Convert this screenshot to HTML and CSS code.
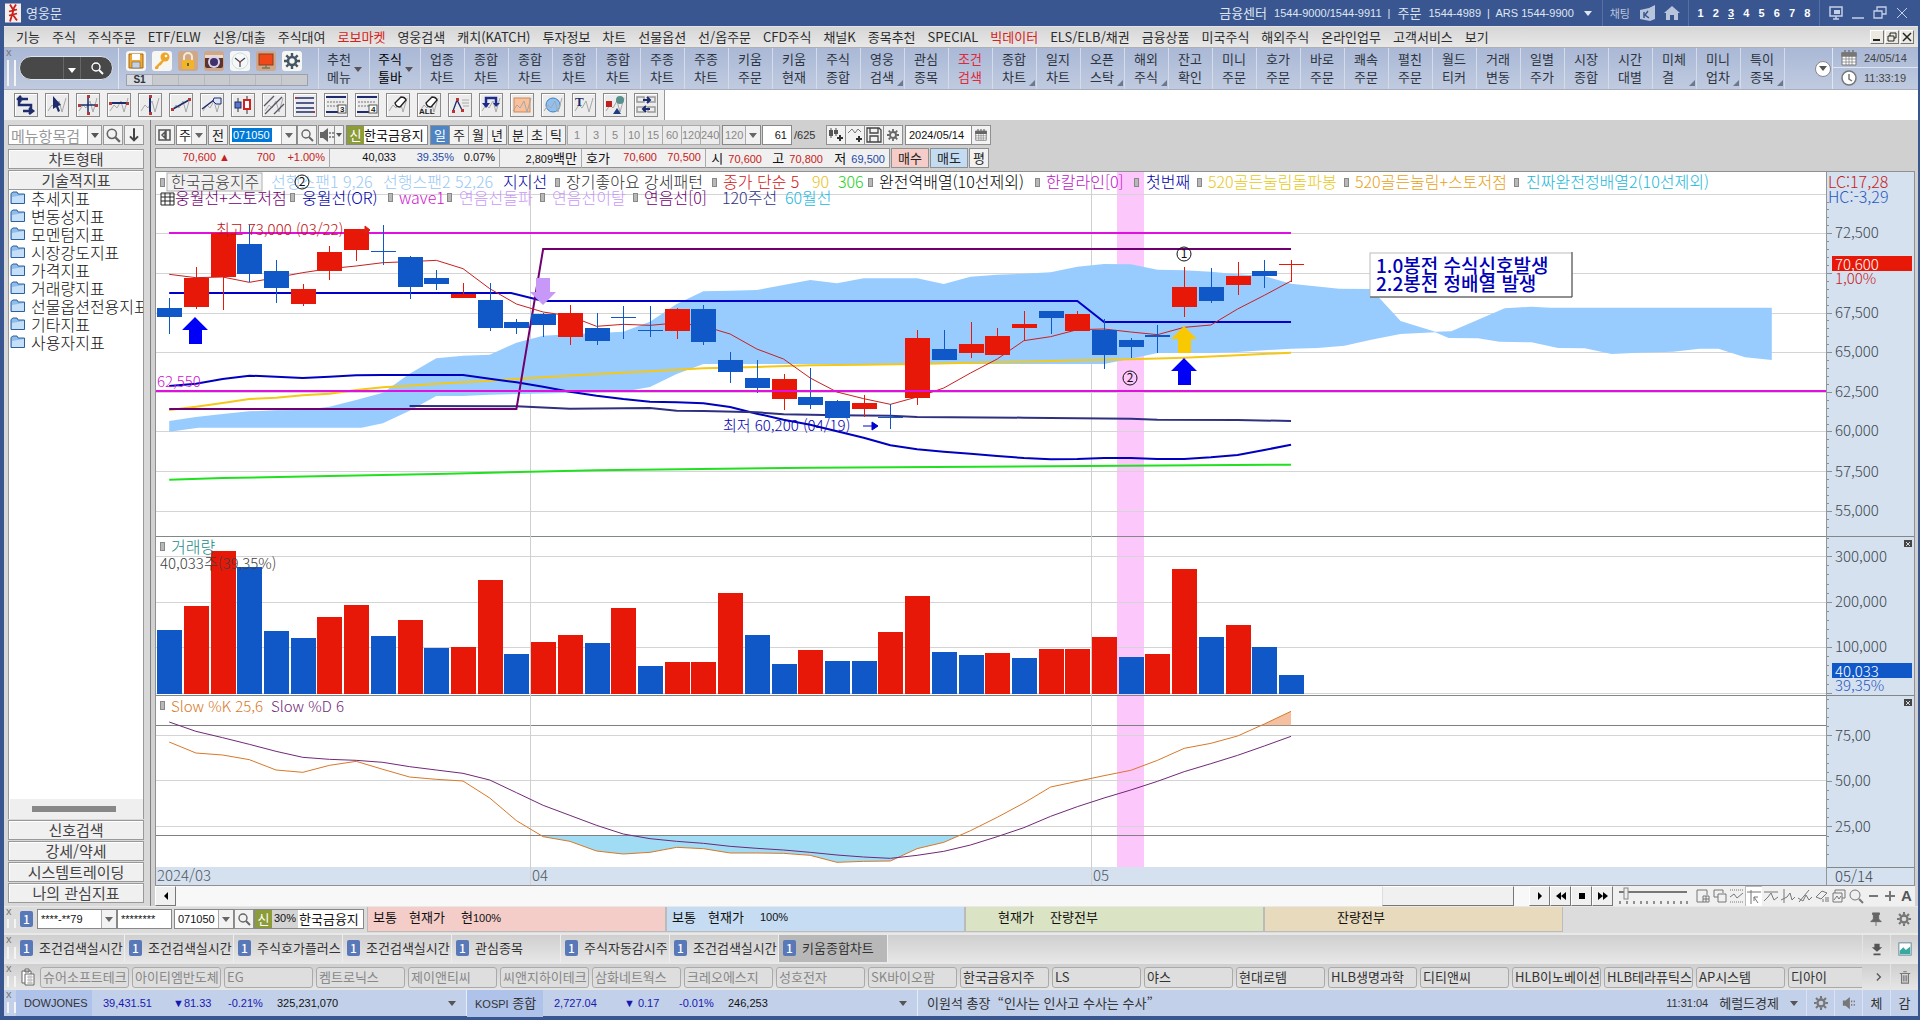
FILE: index.html
```html
<!DOCTYPE html>
<html lang="ko">
<head>
<meta charset="utf-8">
<title>영웅문</title>
<link rel="stylesheet" href="styles.css">
</head>
<body>
<svg class="defs" aria-hidden="true">
  <symbol id="zig" viewBox="0 0 22 22"><path d="M2 17L6 11L9 14L13 7L16 18L20 4" fill="none" stroke="#a8a8a8"/></symbol>
  <symbol id="mag" viewBox="0 0 14 14"><circle cx="6" cy="6" r="4" fill="none" stroke="currentColor" stroke-width="1.4"/><path d="M9 9L13 13" stroke="currentColor" stroke-width="2"/></symbol>
  <symbol id="gear" viewBox="0 0 16 16"><circle cx="8" cy="8" r="4" fill="none" stroke="currentColor" stroke-width="2.6"/><path d="M8 0V3M8 13V16M0 8H3M13 8H16M2.3 2.3L4.5 4.5M11.5 11.5L13.7 13.7M13.7 2.3L11.5 4.5M4.5 11.5L2.3 13.7" stroke="currentColor" stroke-width="2.4"/></symbol>
  <symbol id="spk" viewBox="0 0 16 16"><path d="M1 5H4L9 1V15L4 11H1Z" fill="currentColor"/><path d="M11 5V7M11 9V11M14 5V7M14 9V11" stroke="currentColor" stroke-width="1.4"/></symbol>
  <symbol id="folder" viewBox="0 0 16 14"><path d="M1 12.500V2.500L3 1H7L8 3H14.500V12.500Z" fill="#8fbdea" stroke="#2c5f9c"/><path d="M2 12V6L14 4V12Z" fill="#c5dff8"/></symbol>
  <symbol id="cal" viewBox="0 0 16 16"><path d="M1 3H15V15H1Z" fill="#fff" stroke="currentColor"/><path d="M1 3H15V6H1ZM4 0V3M8 0V3M12 0V3" fill="currentColor" stroke="currentColor" stroke-width="1.500"/><path d="M1 9H15M1 12H15M5 6V15M8 6V15M11 6V15" stroke="currentColor" stroke-width=".7"/></symbol>
</svg>

<div class="window">
<header class="title">
  <svg class="logo" viewBox="0 0 16 19"><rect width="16" height="19" fill="#f4eeee"/><path d="M5 1L8 6L11 1M4 8L12 6M9 5L5 18M7 10L12 17M4 12L12 10" fill="none" stroke="#c8201c" stroke-width="1.800"/></svg>
  <h1>영웅문</h1>
  <p class="phones">금융센터 <span class="n">1544-9000/1544-9911&nbsp; |</span> 주문 <span class="n">1544-4989&nbsp; |&nbsp; ARS 1544-9900</span><i class="tri"></i></p>
  <div class="tools">
    <span>채팅</span>
    <svg width="18" height="18" viewBox="0 0 18 18"><path d="M2 6L11 4L17 1V15L12 17L2 15Z" fill="#b8c4dc"/><path d="M6 8V14M10 7L7 11L11 14" stroke="#3a5690" stroke-width="1.500" fill="none"/></svg>
    <svg width="18" height="18" viewBox="0 0 18 18"><path d="M1 9L9 2L17 9H15V16H11V11H7V16H3V9Z" fill="#b8c4dc"/></svg>
  </div>
  <nav class="screens n"><a href="#">1</a><a href="#">2</a><a href="#" class="on">3</a><a href="#">4</a><a href="#">5</a><a href="#">6</a><a href="#">7</a><a href="#">8</a></nav>
  <div class="wins">
    <button aria-label="화면"><svg viewBox="0 0 14 14"><path d="M1 1H13V10H1ZM4 13H10M7 10V13" fill="none" stroke="#c5d0e6" stroke-width="1.500"/><rect x="5" y="4" width="6" height="4" fill="#c5d0e6"/></svg></button>
    <button aria-label="최소화"><svg viewBox="0 0 14 14"><path d="M1 12H13" stroke="#c5d0e6" stroke-width="1.500"/></svg></button>
    <button aria-label="복원"><svg viewBox="0 0 14 14"><path d="M4 5V1H13V8H9M1 5H9V12H1Z" fill="none" stroke="#c5d0e6" stroke-width="1.300"/></svg></button>
    <button aria-label="닫기"><svg viewBox="0 0 14 14"><path d="M2 2L12 12M12 2L2 12" stroke="#c5d0e6"/></svg></button>
  </div>
</header>

<nav class="menu">
  <a href="#">기능</a><a href="#">주식</a><a href="#">주식주문</a><a href="#">ETF/ELW</a><a href="#">신용/대출</a><a href="#">주식대여</a><a href="#" class="hot">로보마켓</a><a href="#">영웅검색</a><a href="#">캐치(KATCH)</a><a href="#">투자정보</a><a href="#">차트</a><a href="#">선물옵션</a><a href="#">선/옵주문</a><a href="#">CFD주식</a><a href="#">채널K</a><a href="#">종목추천</a><a href="#">SPECIAL</a><a href="#" class="hot">빅데이터</a><a href="#">ELS/ELB/채권</a><a href="#">금융상품</a><a href="#">미국주식</a><a href="#">해외주식</a><a href="#">온라인업무</a><a href="#">고객서비스</a><a href="#">보기</a>
  <div class="mdi">
    <button aria-label="최소화"><svg viewBox="0 0 10 10"><path d="M1 8H8" stroke="#222" stroke-width="2"/></svg></button>
    <button aria-label="복원"><svg viewBox="0 0 10 10"><path d="M3 4V1H9V6H7M1 4H7V9H1Z" fill="none" stroke="#222"/></svg></button>
    <button aria-label="닫기"><svg viewBox="0 0 10 10"><path d="M1 1L9 9M9 1L1 9" stroke="#222" stroke-width="1.500"/></svg></button>
  </div>
</nav>

<div class="quick">
  <div class="grip"></div>
  <div class="find"><div class="pill"><input aria-label="검색"><button class="dd" aria-label="목록"><i class="tri"></i></button><button aria-label="찾기"><svg width="14" height="14"><use href="#mag"/></svg></button></div></div>
  <div class="apps">
    <div class="appicons">
      <button aria-label="저장"><svg viewBox="0 0 20 20"><path d="M3 3H17V17H3Z" fill="#f0a830" stroke="#a86810"/><rect x="6" y="3" width="8" height="6" fill="#fff"/><rect x="6" y="11" width="8" height="6" fill="#c8d0e0" stroke="#666" stroke-width=".6"/></svg></button>
      <button aria-label="열쇠"><svg viewBox="0 0 20 20"><circle cx="13" cy="6" r="4.500" fill="#f0a428"/><circle cx="14" cy="5" r="1.300" fill="#fff"/><path d="M10 9L3 16V18H6L7 15L9 14L12 10Z" fill="#f0a428"/></svg></button>
      <button class="tan" aria-label="잠금"><svg viewBox="0 0 20 20"><path d="M6 9V6A4 4 0 0 1 14 6V9" fill="none" stroke="#f6ead0" stroke-width="2"/><rect x="4" y="9" width="12" height="9" rx="1" fill="#f2b428"/><path d="M10 12V15" stroke="#664" stroke-width="2"/></svg></button>
      <button class="tan" aria-label="화면캡쳐"><svg viewBox="0 0 20 20"><rect x="1" y="4" width="18" height="13" rx="2" fill="#5a3434"/><rect x="1" y="4" width="18" height="3" fill="#e8dcd0"/><circle cx="10" cy="11" r="6" fill="#dcd4e8"/><circle cx="10" cy="11" r="4" fill="#40306c"/></svg></button>
      <button aria-label="시계"><svg viewBox="0 0 20 20"><circle cx="10" cy="10" r="8" fill="#f4f8fa" stroke="#d4dce4"/><path d="M10 11L5 7M10 11L15 7M10 11V16" stroke="#444" stroke-width="1.200"/><circle cx="10" cy="11" r="1" fill="#c33"/></svg></button>
      <button class="tan" aria-label="모니터"><svg viewBox="0 0 20 20"><rect x="3" y="3" width="14" height="11" fill="#f04818" stroke="#8a3c24"/><path d="M10 14V17M6 17H14" stroke="#775" stroke-width="1.500"/></svg></button>
      <button aria-label="설정"><svg viewBox="-2 -2 20 20" color="#456"><use href="#gear" width="16" height="16"/></svg></button>
    </div>
    <div class="strip n"><b>S1</b><i></i><i></i><i></i><i></i><i></i><i></i></div>
  </div>
  <button class="qb w">추천<br>메뉴<i class="tri"></i></button><button class="qb w blk">주식<br>툴바<i class="tri"></i></button>
  <button class="qb">업종<br>차트</button><button class="qb">종합<br>차트</button><button class="qb">종합<br>차트</button><button class="qb">종합<br>차트</button><button class="qb">종합<br>차트</button><button class="qb">주종<br>차트</button><button class="qb">주종<br>차트</button><button class="qb">키움<br>주문</button><button class="qb">키움<br>현재</button><button class="qb">주식<br>종합</button><button class="qb c">영웅<br>검색</button><button class="qb">관심<br>종목</button><button class="qb hot">조건<br>검색</button><button class="qb c">종합<br>차트</button><button class="qb">일지<br>차트</button><button class="qb c">오픈<br>스탁</button><button class="qb c">해외<br>주식</button><button class="qb">잔고<br>확인</button><button class="qb">미니<br>주문</button><button class="qb">호가<br>주문</button><button class="qb">바로<br>주문</button><button class="qb">쾌속<br>주문</button><button class="qb">펼친<br>주문</button><button class="qb">월드<br>티커</button><button class="qb">거래<br>변동</button><button class="qb">일별<br>주가</button><button class="qb">시장<br>종합</button><button class="qb">시간<br>대별</button><button class="qb c">미체<br>결</button><button class="qb c">미니<br>업차</button><button class="qb c">특이<br>종목</button>
  <div class="more"><button aria-label="더보기"><i class="tri"></i></button></div>
  <div class="clock n">
    <p><svg width="16" height="16" color="#777"><use href="#cal"/></svg>24/05/14</p>
    <p><svg width="16" height="16" viewBox="0 0 16 16"><circle cx="8" cy="8" r="7" fill="#fff" stroke="#777" stroke-width="1.500"/><path d="M8 4V9L11 11" fill="none" stroke="#777" stroke-width="1.500"/></svg>11:33:19</p>
  </div>
</div>

<div class="draw">
  <div class="drawset">
    <button aria-label="전환"><svg viewBox="0 0 22 22"><path d="M8 5H4V11H16V17H8M6 2L3 5L6 8M14 14L18 17L14 20" fill="none" stroke="#1c2c6c" stroke-width="2.500"/><path d="M4 5H13" stroke="#1c2c6c" stroke-width="2.500"/></svg></button>
    <button aria-label="선택"><svg viewBox="0 0 22 22"><use href="#zig"/><path d="M7 2L15 11L12 12L14 17L12 18L10 13L7 15Z" fill="#1c2c6c"/></svg></button>
    <button aria-label="십자선"><svg viewBox="0 0 22 22"><use href="#zig"/><path d="M2 11H20M11 2V20" stroke="#1c2c6c" stroke-width="1.500"/><path d="M1 10h3v3h-3zM18 10h3v3h-3zM10 1h3v3h-3zM10 18h3v3h-3z" fill="#b03838"/></svg></button>
    <button aria-label="수평선"><svg viewBox="0 0 22 22"><use href="#zig"/><path d="M2 9H20" stroke="#1c2c6c" stroke-width="2"/><path d="M1 8h3v3h-3zM18 8h3v3h-3z" fill="#b03838"/></svg></button>
    <button aria-label="수직선"><svg viewBox="0 0 22 22"><use href="#zig"/><path d="M11 2V20" stroke="#1c2c6c" stroke-width="2"/><path d="M10 1h3v3h-3zM10 18h3v3h-3z" fill="#b03838"/></svg></button>
    <button aria-label="추세선"><svg viewBox="0 0 22 22"><use href="#zig"/><path d="M3 15L19 6" stroke="#1c2c6c" stroke-width="1.500"/><path d="M1 14h3v3h-3zM18 4h3v3h-3z" fill="#b03838"/></svg></button>
    <button aria-label="연장선"><svg viewBox="0 0 22 22"><use href="#zig"/><path d="M1 15L13 6" stroke="#1c2c6c" stroke-width="1.500"/><path d="M13 4H20V10H15L12 7Z" fill="#dce4f8" stroke="#1c2c6c"/></svg></button>
    <button aria-label="봉"><svg viewBox="0 0 22 22"><path d="M6 4V18M15 2V20" stroke="#333"/><rect x="3" y="8" width="6" height="6" fill="#5878c8" stroke="#1c2c6c"/><rect x="12" y="6" width="6" height="9" fill="#fff" stroke="#d02020" stroke-width="2"/></svg></button>
    <button aria-label="채널"><svg viewBox="0 0 22 22"><use href="#zig"/><path d="M1 12L11 2M2 20L19 3M11 20L21 10" stroke="#556" stroke-width="1.300"/></svg></button>
    <button aria-label="피보나치"><svg viewBox="0 0 22 22"><path d="M2 4H20M2 9H20M2 14H20M2 18H20" stroke="#1c2c6c" stroke-width="1.500"/><path d="M1 3h2v2h-2zM19 17h2v2h-2z" fill="#b03838"/></svg></button>
    <button aria-label="3등분"><svg viewBox="0 0 22 22"><path d="M1 3H21M1 18H21" stroke="#1c2c6c" stroke-width="2"/><path d="M2 8H20M2 12H20" stroke="#777" stroke-dasharray="2 1"/><rect x="13" y="11" width="8" height="8" fill="#fff" stroke="#555"/><text x="15" y="18" class="tiny">3</text></svg></button>
    <button aria-label="4등분"><svg viewBox="0 0 22 22"><path d="M1 3H21M1 18H21" stroke="#1c2c6c" stroke-width="2"/><path d="M2 8H20M2 12H20" stroke="#777" stroke-dasharray="2 1"/><rect x="13" y="11" width="8" height="8" fill="#fff" stroke="#555"/><text x="15" y="18" class="tiny">4</text></svg></button>
    <button aria-label="지우기"><svg viewBox="0 0 22 22"><use href="#zig"/><path d="M8 9L14 3Q18 3 19 6L13 13Q9 13 8 9Z" fill="#fff" stroke="#222" stroke-width="1.300"/></svg></button>
    <button aria-label="모두 지우기"><svg viewBox="0 0 22 22"><use href="#zig"/><path d="M8 9L14 3Q18 3 19 6L13 13Q9 13 8 9Z" fill="#fff" stroke="#222" stroke-width="1.300"/><text x="1" y="20" class="tiny">ALL</text></svg></button>
    <button aria-label="패턴"><svg viewBox="0 0 22 22"><path d="M4 17L8 6L13 16" fill="none" stroke="#1c2c6c" stroke-width="1.300"/><path d="M3 16h3v3h-3zM7 4h3v3h-3zM12 15h3v3h-3z" fill="#c03030"/><path d="M13 6H20M13 9H20M14 12H20" stroke="#aaa"/></svg></button>
    <button aria-label="되돌리기"><svg viewBox="0 0 22 22"><use href="#zig"/><path d="M6 11V4H16V11" fill="none" stroke="#1c2c8c" stroke-width="2.500"/><path d="M2 9H10L6 14ZM13 9H20L16 13Z" fill="#1c2c8c"/></svg></button>
    <button aria-label="사각형"><svg viewBox="0 0 22 22"><rect x="3" y="4" width="16" height="14" fill="#f8c09c" stroke="#d08850"/><use href="#zig"/></svg></button>
    <button aria-label="원"><svg viewBox="0 0 22 22"><circle cx="11" cy="11" r="7" fill="#90c0f0" stroke="#4080c0"/><use href="#zig"/></svg></button>
    <button aria-label="문자"><svg viewBox="0 0 22 22"><use href="#zig"/><text x="2" y="12" class="tee">T</text></svg></button>
    <button aria-label="도형"><svg viewBox="0 0 22 22"><use href="#zig"/><rect x="2" y="7" width="6" height="6" fill="#c02020"/><circle cx="16" cy="6" r="4" fill="#58908c"/><path d="M9 20L13 14L17 20Z" fill="#1c3c80"/></svg></button>
    <button aria-label="이동"><svg viewBox="0 0 22 22"><path d="M2 3H9V8H2ZM13 3H20V8H13ZM2 13H9V18H2ZM13 13H20V18H13Z" fill="none" stroke="#999" stroke-width="1.500"/><path d="M8 6H14M12 3L15 6L12 9M15 15H9M11 12L8 15L11 18" fill="none" stroke="#1c2c6c" stroke-width="2"/></svg></button>
  </div>
</div>

<main class="work">
  <aside class="side">
    <div class="siderow"><input placeholder="메뉴항목검" aria-label="메뉴항목검색"><button aria-label="목록"><i class="tri"></i></button><button class="sq" aria-label="찾기"><svg width="14" height="14"><use href="#mag"/></svg></button><button class="sq" aria-label="내리기"><svg width="12" height="12" viewBox="0 0 12 12"><path d="M6 1V10M3 7L6 10L9 7" fill="none" stroke="#444" stroke-width="1.500"/></svg></button></div>
    <button class="cat">차트형태</button>
    <div class="panel">
      <button class="cat top">기술적지표</button>
      <ul>
        <li><svg><use href="#folder"/></svg>추세지표</li><li><svg><use href="#folder"/></svg>변동성지표</li><li><svg><use href="#folder"/></svg>모멘텀지표</li><li><svg><use href="#folder"/></svg>시장강도지표</li><li><svg><use href="#folder"/></svg>가격지표</li><li><svg><use href="#folder"/></svg>거래량지표</li><li><svg><use href="#folder"/></svg>선물옵션전용지표</li><li><svg><use href="#folder"/></svg>기타지표</li><li><svg><use href="#folder"/></svg>사용자지표</li>
      </ul>
      <div class="hbar"><i></i></div>
    </div>
    <button class="cat">신호검색</button><button class="cat">강세/약세</button><button class="cat">시스템트레이딩</button><button class="cat">나의 관심지표</button>
  </aside>

  <section class="chart">
    <div class="bar">
      <button class="b20" aria-label="패널"><svg viewBox="0 0 16 16"><path d="M2 3H13V13H2ZM9 3V13M5 8L8 5V11Z" fill="none" stroke="#555" stroke-width="1.500"/></svg></button>
      <span class="combo w31"><select aria-label="구분"><option>주</option></select></span>
      <button class="b20">전</button>
      <span class="combo w68"><input class="n sel" value="071050" aria-label="종목코드"></span>
      <button class="b20" aria-label="종목찾기"><svg viewBox="-1 -1 16 16"><use href="#mag" width="14" height="14"/></svg></button>
      <button class="b17 ml" aria-label="소리"><svg viewBox="0 0 16 16"><use href="#spk"/></svg></button><button class="b10" aria-label="소리 목록"><i class="tri"></i></button>
      <span class="name"><b>신</b>한국금융지</span>
      <div class="seg"><button class="on">일</button><button>주</button><button>월</button><button>년</button></div>
      <div class="seg"><button>분</button><button>초</button><button>틱</button></div>
      <div class="seg n dim"><button>1</button><button>3</button><button>5</button><button>10</button><button>15</button><button>60</button><button>120</button><button>240</button></div>
      <span class="combo w39 n dim"><select aria-label="분봉"><option>120</option></select></span>
      <input class="cnt n" value="61" aria-label="봉수"><span class="tot n">/625</span>
      <div class="seg ic">
        <button aria-label="봉추가"><svg viewBox="0 0 16 16"><path d="M3 1V11M8 1V9" stroke="#555"/><path d="M1 3h4v6h-4zM6 3h4v4h-4z" fill="#555"/><path d="M9 11H15M12 8V14" stroke="#333" stroke-width="2"/></svg></button>
        <button aria-label="지표추가"><svg viewBox="0 0 16 16"><path d="M1 6L5 2L8 6L11 2L14 5" fill="none" stroke="#777"/><path d="M9 12H15M12 9V15" stroke="#333" stroke-width="2"/></svg></button>
        <button aria-label="저장"><svg viewBox="0 0 16 16"><path d="M1 1H13L15 3V15H1ZM4 1V6H12V1M4 15V9H12V15" fill="none" stroke="#444" stroke-width="1.300"/></svg></button>
        <button aria-label="설정"><svg viewBox="0 0 16 16"><use href="#gear" x="2" y="2" width="12" height="12"/></svg></button>
      </div>
      <input class="date n" value="2024/05/14" aria-label="날짜"><button class="b20" aria-label="달력"><svg viewBox="0 0 16 16"><use href="#cal" x="2" y="2" width="12" height="12"/></svg></button>
    </div>
    <div class="bar quotes">
      <div class="quote n">
        <span class="q1 up">70,600 ▲</span><span class="q2 up">700</span><span class="q3 up">+1.00%</span>
        <span class="q4">40,033</span><span class="q5 dn">39.35%</span><span class="q6">0.07%</span>
        <span class="q7">2,809<em>백만</em></span>
        <span class="q8"><em>호가</em></span><span class="q9 up">70,600</span><span class="q10 up">70,500</span>
        <span class="q11"><em>시</em> <b class="up">70,600</b></span><span class="q11"><em>고</em> <b class="up">70,800</b></span><span class="q11"><em>저</em> <b class="dn">69,500</b></span>
      </div>
      <button class="buy">매수</button><button class="sell">매도</button><button class="b20">평</button>
    </div>
    <div class="canvas">
      <svg class="plot" id="plot">
        <g id="back"></g>
        <rect class="dateband" x="0" y="695" width="100%" height="18"/>
        <path d="M374 0V713M935 0V713" class="vgrid"/>
        <g id="series"></g>
        <g class="markers" id="markers"></g>
        <rect x="11" y="1" width="95" height="18" class="titlebox"/>
        <g class="legend">
          <text x="15" y="16" fill="#404040">한국금융지주</text>
          <text x="115" y="16" fill="#98c8f4">선행스팬1 9,26</text>
          <text x="227" y="16" fill="#98c8f4">선행스팬2 52,26</text>
          <text x="347" y="16" fill="#0000a8">지지선</text>
          <text x="410" y="16" fill="#303030">장기좋아요 강세패턴</text>
          <text x="567" y="16" fill="#d01010">종가 단순 5</text>
          <text x="656" y="16" fill="#e8c020">90</text>
          <text x="682" y="16" fill="#20d020">306</text>
          <text x="723" y="16" fill="#000">완전역배열(10선제외)</text>
          <text x="890" y="16" fill="#c010c8">한칼라인[0]</text>
          <text x="990" y="16" fill="#0000a8">첫번째</text>
          <text x="1052" y="16" fill="#e8c820">520골든눌림돌파봉</text>
          <text x="1199" y="16" fill="#e8a020">520골든눌림+스토저점</text>
          <text x="1370" y="16" fill="#20b8d8">진짜완전정배열2(10선제외)</text>
          <text x="19" y="32" fill="#700070">웅월선+스토저점</text>
          <text x="146" y="32" fill="#0000a8">웅월선(OR)</text>
          <text x="243" y="32" fill="#d010d0">wave1</text>
          <text x="303" y="32" fill="#c898f8">연음선돌파</text>
          <text x="396" y="32" fill="#c898f8">연음선이탈</text>
          <text x="488" y="32" fill="#700070">연음선[0]</text>
          <text x="566" y="32" fill="#303080">120주선</text>
          <text x="629" y="32" fill="#20b8e0">60월선</text>
        </g>
        <path d="M5 21H18V33H5ZM5 25H18M5 29H18M9 21V33M14 21V33" fill="none" stroke="#222"/>
        <g class="note">
          <text x="60" y="63" fill="#c01010">최고 73,000 (03/22)</text>
          <path d="M204 58H212M209 54L214 58L209 62Z" stroke="#e02010" fill="#e02010"/>
          <text x="567" y="259" fill="#0000b0">최저 60,200 (04/19)</text>
          <path d="M707 254H717M716 250L722 254L716 258Z" stroke="#0000d0" fill="#0000d0"/>
          <text x="1" y="215" fill="#d010d0">62,550</text>
          <text x="15" y="381" fill="#208888" class="big">거래량</text>
          <text x="4" y="397" fill="#404040">40,033주(39,35%)</text>
          <text x="15" y="540" fill="#d87828">Slow %K 25,6</text>
          <text x="115" y="540" fill="#702878">Slow %D 6</text>
          <text x="1" y="709" fill="#505860">2024/03</text><text x="376" y="709" fill="#505860">04</text><text x="937" y="709" fill="#505860">05</text>
        </g>
        <g class="circ"><circle cx="146" cy="10" r="7"/><text x="146" y="14">2</text><circle cx="974" cy="206" r="7"/><text x="974" y="210">2</text><circle cx="1028" cy="82" r="7"/><text x="1028" y="86">1</text></g>
        <path d="M39 145L52 158H46V172H33V158H26Z" fill="#0000f8"/>
        <path d="M387 133L400 120H394V106H380V120H374Z" fill="#c898f8"/>
        <path d="M1028 154L1041 167H1035V181H1022V167H1015Z" fill="#f8c800"/>
        <path d="M1028 186L1041 199H1035V213H1022V199H1015Z" fill="#0000f8"/>
        <rect x="1214" y="81" width="202" height="44" class="memo"/><path d="M1214 125H1416V80" fill="none" stroke="#444"/>
        <g class="memot"><text x="1220" y="101">1.0봉전 수식신호발생</text><text x="1220" y="119">2.2봉전 정배열 발생</text></g>
      </svg>
      <svg class="axis" id="axis">
        <g id="ticks"></g>
        <text x="1" y="16" fill="#c82020" class="big">LC:17,28</text><text x="1" y="31" fill="#2858c0" class="big">HC:-3,29</text>
        <text x="8" y="66">72,500</text><text x="8" y="146">67,500</text><text x="8" y="185">65,000</text><text x="8" y="225">62,500</text><text x="8" y="264">60,000</text><text x="8" y="305">57,500</text><text x="8" y="344">55,000</text>
        <rect x="5" y="84" width="80" height="15" fill="#e81808"/><text x="8" y="98" fill="#fff">70,600</text><text x="8" y="112" fill="#c82020">1,00%</text>
        <text x="8" y="390">300,000</text><text x="8" y="435">200,000</text><text x="8" y="480">100,000</text>
        <rect x="5" y="491" width="80" height="15" fill="#1058c8"/><text x="8" y="505" fill="#fff">40,033</text><text x="8" y="519" fill="#2858c0">39,35%</text>
        <text x="8" y="569">75,00</text><text x="8" y="614">50,00</text><text x="8" y="660">25,00</text><text x="8" y="710">05/14</text>
        <path d="M77 368h8v7h-8zM77 527h8v7h-8z" fill="#444"/><path d="M79 370l4 4m0-4l-4 4M79 529l4 4m0-4l-4 4" stroke="#fff" stroke-width=".8"/>
      </svg>
    </div>
    <div class="scroll">
      <button class="raised" aria-label="왼쪽"><svg viewBox="0 0 16 16"><path d="M10 4V12L6 8Z"/></svg></button>
      <div class="track"><div class="thumb"></div></div>
      <button class="raised" aria-label="재생"><svg viewBox="0 0 16 16"><path d="M6 4V12L10 8Z"/></svg></button>
      <button class="raised" aria-label="뒤로"><svg viewBox="0 0 16 16"><path d="M8 4V12L3 8ZM13 4V12L8 8Z"/></svg></button>
      <button class="raised" aria-label="정지"><svg viewBox="0 0 16 16"><path d="M5 5H11V11H5Z"/></svg></button>
      <button class="raised" aria-label="앞으로"><svg viewBox="0 0 16 16"><path d="M3 4V12L8 8ZM8 4V12L13 8Z"/></svg></button>
      <svg class="slider" width="72" height="19"><path d="M2 6H70" stroke="#777" stroke-width="2"/><path d="M3 15V18M10 15V18M17 15V18M24 15V18M30 15V18M37 15V18M44 15V18M51 15V18M57 15V18M64 15V18M70 15V18" stroke="#333"/><rect x="7" y="2" width="4" height="11" fill="#eee" stroke="#888"/></svg>
      <div class="minis">
        <button aria-label="추가"><svg viewBox="0 0 16 16"><path d="M8 14H2V2H12V7M8 8H14V14H8ZM8 11H14M11 8V14"/></svg></button>
        <button aria-label="복사"><svg viewBox="0 0 16 16"><path d="M6 9H2V2H11V5M6 6H14V14H6Z"/></svg></button>
        <button aria-label="영역"><svg viewBox="0 0 16 16"><path d="M1 2H15M1 14H15" stroke-dasharray="1 1"/><path d="M1 9L5 6L8 10L14 5"/></svg></button>
        <button class="on" aria-label="이동"><svg viewBox="0 0 16 16"><path d="M1 3H15M5 1V15M12 14L8 8M8 12V8H12"/></svg></button>
        <button aria-label="수평"><svg viewBox="0 0 16 16"><path d="M1 4H15M1 13L5 9L8 5L11 12L15 9"/></svg></button>
        <button aria-label="수직"><svg viewBox="0 0 16 16"><path d="M4 1V15M1 12L7 9L10 5L12 12L15 9"/></svg></button>
        <button aria-label="추세"><svg viewBox="0 0 16 16"><path d="M2 14L12 2M1 10L6 13L9 7L12 12L15 9"/></svg></button>
        <button aria-label="삭제"><svg viewBox="0 0 16 16"><path d="M2 9L8 3L13 5L7 11ZM9 14V11M12 14V9M14 14V9"/></svg></button>
        <button aria-label="차트"><svg viewBox="0 0 16 16"><path d="M4 5V2H14V10H11M2 5H11V14H2ZM3 12L6 8L8 11L10 8"/></svg></button>
        <button aria-label="돋보기"><svg viewBox="0 0 16 16"><circle cx="7" cy="7" r="5" fill="none"/><path d="M11 11L15 15" stroke-width="2"/></svg></button>
        <button aria-label="축소"><svg viewBox="0 0 16 16"><path d="M4 8H13" stroke-width="2"/></svg></button>
        <button aria-label="확대"><svg viewBox="0 0 16 16"><path d="M3 8H13M8 3V13" stroke-width="2"/></svg></button>
        <button class="aa">A</button>
      </div>
    </div>
  </section>
</main>

<div class="dock order">
  <div class="grip"></div><b class="badge">1</b>
  <span class="combo w80"><select class="n" aria-label="계좌"><option>****-**79</option></select></span><input class="n pw" value="********" aria-label="비밀번호">
  <span class="combo w60"><input class="n" value="071050" aria-label="주문 종목"></span><button class="b20" aria-label="종목찾기"><svg viewBox="-1 -1 16 16"><use href="#mag" width="14" height="14"/></svg></button>
  <span class="name wide"><b>신</b><i class="n">30%</i>한국금융지</span>
  <div class="ord pink"><span>보통</span><span>현재가</span><span>현<em class="n">100%</em></span></div>
  <div class="ord blue"><span>보통</span><span>현재가</span><span class="n">100%</span></div>
  <div class="ord green"><span>현재가</span><span>잔량전부</span></div>
  <div class="ord beige"><span>잔량전부</span></div>
  <div class="end"><button aria-label="고정"><svg viewBox="0 0 16 16"><path d="M4 1H12V3L11 4V8L14 11H2L5 8V4L4 3ZM8 11V16" fill="#666" stroke="#666"/></svg></button><button aria-label="설정"><svg viewBox="0 0 16 16"><use href="#gear"/></svg></button></div>
</div>

<div class="dock tabs">
  <div class="grip"></div>
  <button><b class="badge">1</b>조건검색실시간</button><button><b class="badge">1</b>조건검색실시간</button><button><b class="badge">1</b>주식호가플러스</button><button><b class="badge">1</b>조건검색실시간</button><button><b class="badge">1</b>관심종목</button><button><b class="badge">1</b>주식자동감시주</button><button><b class="badge">1</b>조건검색실시간</button><button class="on"><b class="badge">1</b>키움종합차트</button>
  <div class="end"><button aria-label="내리기"><svg viewBox="0 0 16 16"><path d="M5 2H11V6H14L8 11L2 6H5ZM4 13H12V15H4Z" fill="#555"/></svg></button><button aria-label="그림"><svg viewBox="0 0 16 16"><rect x="1" y="1" width="14" height="14" fill="#fff" stroke="#5a8090"/><path d="M2 14V10L6 6L9 9L14 5V14Z" fill="#38a8a0"/></svg></button></div>
</div>

<div class="dock stocks">
  <div class="grip"></div>
  <svg class="clip" viewBox="0 0 16 18"><path d="M2 3H11V15H2ZM5 1H9V4H5Z" fill="#fff" stroke="#666"/><path d="M5 6H14V17H5Z" fill="#fff" stroke="#666"/><path d="M7 9H13M7 12H13M7 15H13M9 7V16M11 7V16" stroke="#aaa" stroke-width=".8"/></svg>
  <div class="list"><button>슈어소프트테크</button><button>아이티엠반도체</button><button>EG</button><button>켐트로닉스</button><button>제이앤티씨</button><button>씨앤지하이테크</button><button>삼화네트웍스</button><button>크레오에스지</button><button>성호전자</button><button>SK바이오팜</button><button class="k">한국금융지주</button><button class="k">LS</button><button class="k">야스</button><button class="k">현대로템</button><button class="k">HLB생명과학</button><button class="k">디티앤씨</button><button class="k">HLB이노베이션</button><button class="k">HLB테라퓨틱스</button><button class="k">AP시스템</button><button class="k">디아이</button></div>
  <div class="end"><button aria-label="다음"><svg viewBox="0 0 16 16"><path d="M9 4L13 8L9 12" fill="none" stroke="#555" stroke-width="1.500"/></svg></button><button aria-label="휴지통"><svg viewBox="0 0 16 16"><path d="M2 4H14M6 2H10M4 4V15H12V4M6 6V13M8 6V13M10 6V13" fill="none" stroke="#777" stroke-width="1.200"/></svg></button></div>
</div>

<footer class="dock ticker">
  <div class="grip"></div>
  <div class="idx"><b class="n">DOWJONES</b><span class="n t1">39,431.51</span><span class="n t2">▼81.33</span><span class="n t3">-0.21%</span><span class="n t4">325,231,070</span><i class="tri"></i></div>
  <div class="idx"><b><span class="n">KOSPI</span> 종합</b><span class="n t1">2,727.04</span><span class="n t2">▼ 0.17</span><span class="n t3">-0.01%</span><span class="n t4">246,253</span><i class="tri"></i></div>
  <p class="news">이원석 총장&nbsp; “인사는 인사고 수사는 수사”</p>
  <p class="src"><span class="n">11:31:04</span>헤럴드경제<i class="tri"></i></p>
  <div class="end"><button aria-label="설정"><svg viewBox="0 0 16 16"><use href="#gear"/></svg></button><button aria-label="소리"><svg viewBox="0 0 16 16"><use href="#spk"/></svg></button><button>체</button><button>감</button></div>
</footer>
</div>
<script src="chart.js"></script>
</body>
</html>
```
FILE: styles.css
```css
* { box-sizing: border-box; }
body {
  margin: 0;
  font: 13px/18px "Noto Sans CJK KR", sans-serif;
  color: #333;
  background: #3a5690;
}
h1, p, ul { margin: 0; padding: 0; font-weight: 400; }
button, input, select { font: inherit; color: inherit; margin: 0; padding: 0; border: 0; background: none; border-radius: 0; min-width: 0; }
button { line-height: 18px; white-space: nowrap; }
button svg { display: block; width: 16px; height: 16px; margin: auto; }
select { appearance: none; }
a { color: inherit; text-decoration: none; }
em, i { font-style: normal; }
.defs { position: absolute; width: 0; height: 0; }
.n { font-family: "Liberation Sans", "Noto Sans CJK KR", sans-serif; font-size: 11px; }
.n em { font-family: "Noto Sans CJK KR", sans-serif; font-size: 13px; }
.tri { display: inline-block; width: 0; height: 0; border: 4px solid transparent; border-top: 5px solid #555; border-bottom: 0; flex: none; }
.window { padding: 0 2px 4px 4px; min-height: 100vh; display: flex; flex-direction: column; overflow: hidden; }
.hot { color: #e02020; }

/* title */
.title { height: 26px; display: flex; align-items: center; color: #dfe6f2; white-space: nowrap; }
.logo { width: 16px; height: 20px; margin: 0 5px 0 1px; }
.title h1 { font-size: 13px; flex: 1; }
.phones { display: flex; align-items: center; gap: 7px; padding-right: 10px; }
.phones .tri { border-top-color: #dfe6f2; margin-left: 3px; }
.tools { display: flex; align-items: center; gap: 7px; padding: 0 7px; height: 26px; border-left: 1px solid #5570a4; font-size: 11px; color: #b8c4dc; }
.tools span { margin-right: 1px; }
.screens { display: flex; width: 132px; height: 26px; align-items: center; padding: 0 4px; border: solid #5570a4; border-width: 0 1px; font-weight: 700; color: #fff; }
.screens a { flex: 1; text-align: center; line-height: 15px; }
.screens .on { text-decoration: underline; }
.wins { display: flex; gap: 8px; padding: 0 9px; }
.wins svg { width: 14px; height: 14px; }

/* menu */
.menu { height: 22px; display: flex; align-items: center; gap: 12px; padding: 0 4px 0 12px; background: linear-gradient(#d6d6d6, #e8e8e8); border-bottom: 1px solid #b0b0b0; border-top: 1px solid #e4e4e4; white-space: nowrap; color: #2c2c2c; }
.menu .hot { color: #d82018; }
.mdi { margin-left: auto; display: flex; gap: 1px; }
.mdi button { width: 14px; height: 14px; background: #ece9e0; border: 1px solid; border-color: #fff #777 #777 #fff; }
.mdi svg { width: 10px; height: 10px; }

/* quick toolbar */
.quick { height: 42px; display: flex; background: linear-gradient(#aab8d6, #c0cbe0); border-bottom: 1px solid #a8b0c0; color: #2c3440; }
.grip { width: 12px; flex: none; position: relative; }
.grip::before { content: "x"; position: absolute; left: 2px; top: -3px; font: 11px/14px "Liberation Sans", sans-serif; color: #777; }
.grip::after { content: ""; position: absolute; left: 3px; top: 12px; width: 5px; bottom: 3px; border: solid #f4f4f4; border-width: 0 2px; }
.find { width: 103px; padding: 8px 0 0 3px; border-right: 1px solid #e0e6f0; flex: none; }
.pill { display: flex; width: 94px; height: 24px; border-radius: 12px; background: #484848; border: 1px solid #e0e4ec; overflow: hidden; color: #fff; }
.pill input { width: 43px; }
.pill .dd { width: 18px; border: solid #666; border-width: 0 1px; }
.pill .tri { border-top-color: #fff; }
.pill button:last-child { flex: 1; }
.pill svg { width: 14px; height: 14px; }
.apps { width: 199px; padding: 3px 10px 0 7px; flex: none; }
.appicons { display: flex; gap: 6px; margin-bottom: 3px; }
.appicons button { width: 20px; height: 20px; border-radius: 3px; background: #f6f6f2; }
.appicons .tan { background: #d0a888; }
.appicons svg { width: 20px; height: 20px; }
.strip { display: flex; height: 12px; width: 182px; background: #c8cace; border: 1px solid #9aa0ac; }
.strip b { width: 25px; font-size: 10px; line-height: 10px; text-align: center; background: #d8dadf; }
.strip i { flex: 1; border-left: 1px solid #b4b8c0; }
.qb { width: 44px; flex: none; height: 41px; padding: 0 10px 2px 9px; border-left: 1px solid #d4dcea; text-align: left; position: relative; }
.qb.w { width: 51px; padding-left: 8px; }
.qb .tri { position: absolute; right: 7px; top: 19px; }
.qb.blk { color: #000; }
.qb.hot { color: #e02838; }
.qb.c::after { content: ""; position: absolute; right: 1px; bottom: 3px; border: 3px solid #6c7890; border-top-color: transparent; border-left-color: transparent; }
.more { flex: 1; display: flex; align-items: center; justify-content: flex-end; padding: 0 1px; border-left: 1px solid #d4dcea; }
.more button { width: 16px; height: 16px; border-radius: 8px; background: #fff; border: 1px solid #888; display: grid; place-items: center; }
.clock { width: 86px; flex: none; border-left: 1px solid #e0e6f0; color: #444; }
.clock p { display: flex; align-items: center; gap: 7px; padding-left: 8px; height: 20px; }
.clock p:first-child { border-bottom: 1px solid #e0e6f0; }

/* drawing tools */
.draw { height: 30px; background: #fff; display: flex; }
.drawset { display: flex; gap: 7px; padding: 3px 6px 0 10px; background: #f0f0f0; border-right: 1px solid #999; }
.drawset button { width: 24px; height: 24px; border: 1px solid #8a8a8a; background: #ececec; box-shadow: inset 1px 1px #fff; }
.drawset svg { width: 22px; height: 22px; }
.tiny { font: 700 8px "Liberation Sans", sans-serif; fill: #222; }
.tee { font: 700 13px "Liberation Serif", serif; fill: #1c2c6c; }

/* work area */
.work { display: flex; background: #d0d0d0; flex: 1; }
.side { width: 147px; flex: none; padding: 5px 6px 3px 4px; border-right: 1px solid #808080; display: flex; flex-direction: column; background: #d8d8d8; gap: 1px; }
.siderow { display: flex; height: 20px; margin-bottom: 3px; }
.siderow input { width: 81px; height: 20px; padding-left: 2px; border: 1px solid #999; background: #fff; font-size: 15px; color: #888; }
.siderow input::placeholder { color: #999; opacity: 1; }
.siderow button { width: 14px; height: 20px; border: 1px solid #999; border-left: 0; background: #f2f2f2; display: grid; place-items: center; color: #666; }
.siderow .sq { width: 20px; margin-left: 1px; border-left: 1px solid #999; }
.cat { height: 20px; flex: none; border: 1px solid #999; padding-bottom: 2px; background: #f0f0f0; font-size: 15px; color: #444; box-shadow: inset 1px 1px #fff; }
.panel { flex: 1; background: #fff; border: solid #999; border-width: 0 1px; display: flex; flex-direction: column; overflow: hidden; }
.cat.top { border-width: 1px 0; }
.panel ul { list-style: none; flex: 1; }
.panel li { display: flex; align-items: center; gap: 5px; height: 18px; padding: 0 0 2px 1px; font-size: 16px; font-weight: 300; color: #111; white-space: nowrap; }
.panel li svg { width: 16px; height: 14px; flex: none; }
.hbar { height: 20px; background: #efefef; margin-left: 1px; padding: 7px 27px 0 22px; }
.hbar i { display: block; height: 6px; background: #888; }

.chart { flex: 1; min-width: 0; padding: 5px 3px 0 4px; display: flex; flex-direction: column; }
.bar { display: flex; height: 20px; white-space: nowrap; margin-bottom: 3px; }
.bar button, .order .b20 { border: 1px solid #909090; background: #f2f2f2; height: 20px; color: #222; padding-bottom: 1px; }
.bar button svg, .order .b20 svg { color: #666; }
.b20 { width: 20px; flex: none; }
.b17 { width: 17px; }
.b10 { width: 10px; margin-left: -1px; display: grid; place-items: center; }
.b10 .tri { border-width: 4px 3px 0; }
.combo { display: flex; position: relative; border: 1px solid #888; height: 20px; background: #fff; margin: 0 1px; color: #111; flex: none; }
.combo::after { content: ""; position: absolute; right: 3px; top: 7px; border: 4px solid transparent; border-top: 5px solid #666; border-bottom: 0; }
.combo::before { content: ""; position: absolute; right: 0; top: 0; width: 14px; height: 18px; border-left: 1px solid #aaa; background: #f2f2f2; }
.combo select, .combo input { width: 100%; padding: 0 2px; }
.w31 { width: 31px; }
.w68 { width: 68px; margin-right: 0; }
.w39 { width: 39px; }
.w60 { width: 60px; margin-right: 0; }
.w80 { width: 80px; margin: 0 0 0 4px; }
.combo .sel { width: 40px; height: 14px; margin: 2px 2px; padding: 0 1px; background: #0078d7; color: #fff; }
.ml { margin-left: 1px; }
.name { display: flex; width: 82px; height: 20px; margin: 0 2px; background: #fff; border: 1px solid #888; line-height: 17px; color: #111; overflow: hidden; flex: none; }
.name b { width: 17px; background: #8c9c38; color: #fff; font-weight: 400; text-align: center; flex: none; }
.seg { display: flex; margin-right: 1px; }
.seg button { width: 20px; margin-right: -1px; }
.seg button:last-child { margin-right: 0; }
.seg .on { background: #4c84c4; color: #fff; }
.dim button, .dim select { color: #888; background: #ececec; border-color: #aaa; }
.cnt { width: 30px; text-align: right; padding-right: 4px; background: #fff; border: 1px solid #888; color: #111; }
.tot { width: 34px; padding-left: 2px; line-height: 20px; }
.seg.ic { width: 78px; }
.date { width: 66px; background: #fff; border: 1px solid #888; border-right: 0; padding-left: 3px; color: #111; }
.quote { display: grid; grid-template-columns: 82px 41px 51px 70px 58px 42px 82px 30px 49px 45px 60px 61px 62px; width: 735px; height: 20px; line-height: 17px; background: #f0f0f0; border: 1px solid #909090; color: #111; text-align: right; padding-right: 1px; }
.quote span { padding-right: 4px; }
.quote .q1 { padding-right: 8px; }
.quote b { font-weight: 400; margin-left: 2px; }
.quote .q8 { padding-right: 2px; }
.quote .q3, .quote .q6, .quote .q7, .quote .q10 { border-right: 1px solid #aaa; }
.quote .up { color: #c82018; }
.quote .dn { color: #2048a8; }
.quotes { gap: 1px; }
.quotes .buy, .quotes .sell { width: 38px; }
.quotes .buy { background: #f6ccc8; }
.quotes .sell { background: #c4dcf2; }

.canvas { display: flex; border: 1px solid #909090; background: #fff; }
.plot { flex: 1; min-width: 0; height: 713px; display: block; }
.axis { width: 88px; height: 713px; flex: none; display: block; background: #d5e1ef; border-left: 1px solid #909898; }
.axis text, .note text { font-size: 15px; font-weight: 300; }
.axis text:not([fill]) { fill: #404850; }
.legend text, .axis .big, .note .big { font-size: 16px; font-weight: 300; }
.titlebox { fill: #f0f0f0; stroke: #b0b0b0; }
.markers rect { fill: #b8b8b8; stroke: #888; }
.vgrid { stroke: #d0d0d0; fill: none; shape-rendering: crispEdges; }
.dateband { fill: #d5e1ef; }
.circ circle { fill: none; stroke: #111; }
.circ text { font-size: 12px; text-anchor: middle; fill: #111; }
.memo { fill: #fff; stroke: #bbb; }
.memot text { font-size: 19px; font-weight: 500; fill: #0000b8; }

.scroll { display: flex; height: 20px; background: #f0f0f0; }
.raised { width: 21px; flex: none; border: 1px solid; border-color: #fff #777 #777 #fff; background: #f0f0f0; }
.track { flex: 1; background: #f8f8f8; display: flex; justify-content: flex-end; }
.thumb { width: 132px; margin-right: 15px; background: #f0f0f0; border: 1px solid; border-color: #fff #777 #777 #ddd; }
.slider { margin: 0 5px 0 4px; }
.minis { display: flex; }
.minis button { width: 17px; }
.minis svg { fill: none; stroke: #777; }
.minis .on { background: #fff; border: 1px solid #bbb; border-width: 1px 0 0 1px; }
.minis .aa { font: 700 15px/20px "Liberation Sans", sans-serif; color: #555; }

/* docked rows */
.dock { display: flex; align-items: center; background: linear-gradient(#cfcfcf, #e6e6e6); border-top: 2px solid #e8e8e8; white-space: nowrap; }
.dock .grip { align-self: stretch; }
.badge { width: 13px; height: 16px; line-height: 15px; border-radius: 2px; background: #5878b8; color: #fff; text-align: center; font-size: 12px; font-weight: 500; flex: none; }
.end { margin-left: auto; display: flex; align-self: stretch; }
.end button { width: 28px; border-left: 1px solid #e4e4e4; color: #333; }
.end svg { width: 14px; height: 14px; color: #777; }
.order { height: 27px; padding-bottom: 2px; border-top: 1px solid #e8e8e8; background: #dcdcdc; }
.order .badge { margin-left: 4px; }
.pw { width: 55px; height: 20px; margin-right: 1px; padding: 0 3px; background: #fff; border: 1px solid #888; color: #111; flex: none; }
.order .combo input, .order .combo select { color: #111; padding-left: 3px; }
.name.wide { width: 110px; margin: 0 3px 0 0; }
.name i { width: 26px; margin-right: 1px; background: #d4d4d4; text-align: center; }
.ord { flex: 0 1 299px; height: 25px; align-self: flex-start; padding: 0 5px; display: grid; grid-template-columns: 36px 52px 1fr; line-height: 20px; border: solid #bbb; border-width: 0 1px 1px; color: #111; }
.ord.pink { background: #f4ccc8; }
.ord.blue { background: #c6dcf2; }
.ord.green { background: #dae4c4; padding-left: 32px; grid-template-columns: 52px 1fr; }
.ord.beige { background: #e8dabc; padding-left: 72px; grid-template-columns: 1fr; }
.tabs { height: 29px; }
.tabs > button { width: 109px; height: 27px; flex: none; display: flex; align-items: center; gap: 6px; padding: 0 0 2px 4px; border-right: 1px solid #eee; }
.tabs > .on { background: #b8b8b8; }
.stocks { height: 28px; }
.clip { width: 16px; height: 18px; margin: 0 4px; flex: none; }
.list { display: flex; gap: 3px; overflow: hidden; flex: 1; }
.list button { width: 89px; height: 21px; flex: none; border: 1px solid #aaa; border-radius: 3px; background: #dedede; text-align: left; padding: 0 0 2px 2px; color: #888; }
.list .k { color: #333; }
.stocks .end { margin-left: 0; }
.stocks .end button:first-child, .order .end button { border: 0; }
.ticker { height: 26px; background: #c2d0ea; border: 0; }
.idx { display: flex; align-items: center; align-self: stretch; width: 451px; flex: none; border-right: 1px solid #e4ecf8; color: #1818b0; }
.idx b { width: 76px; line-height: 26px; padding-left: 8px; margin-right: 11px; background: #aec2ea; color: #333; font-weight: 400; flex: none; }
.idx .t1 { width: 70px; }
.idx .t2 { width: 55px; }
.idx .t3 { width: 49px; }
.idx .t4 { flex: 1; color: #111; }
.idx .tri { margin-right: 10px; }
.news { margin-left: 9px; flex: 1; }
.src { display: flex; align-items: center; gap: 11px; margin-right: 8px; }
.ticker .end { margin-left: 0; }
.ticker .end button { border-color: #d8e2f2; }
```
FILE: chart.js
```js
// Values are stored in thirds of a pixel, measured from the top of each pane group.
const STEP = 26.71, X0 = 13.2, BAR = 25;
const upper = v => v / 3 - 2;
const lower = v => v / 3 + 358;
const cx = i => X0 + i * STEP;
const RED = '#e81808', BLUE = '#1058c8';

// high, body top, body bottom, low, 1 = up
const candles = [[384,414,441,491,0],[291,324,411,416,1],[189,189,321,420,1],[166,222,312,335,0],[270,303,354,399,0],[342,357,403,408,1],[228,246,303,330,1],[178,178,240,272,1],[165,243,246,285,0],[258,261,351,387,0],[300,324,342,360,0],[339,372,384,384,1],[339,390,474,483,0],[447,456,474,491,0],[429,432,465,501,0],[405,429,501,524,1],[429,474,513,524,0],[408,440,443,507,0],[408,480,483,500,0],[414,417,483,507,1],[405,417,516,524,0],[546,570,606,639,0],[570,624,654,668,0],[612,627,687,720,1],[594,681,705,717,0],[690,693,744,744,0],[675,699,717,741,1],[703,741,744,777,0],[480,504,684,705,1],[480,537,570,570,0],[456,522,549,564,1],[474,498,555,555,1],[423,462,474,514,1],[423,423,444,492,0],[423,432,483,483,1],[447,480,555,597,0],[504,510,531,564,0],[465,495,501,549,0],[291,351,411,441,1],[294,351,393,399,0],[276,318,345,375,1],[270,303,318,354,0],[270,283,286,336,1]];
const volTop = [300,228,63,111,303,324,261,225,318,270,354,351,150,372,336,315,339,234,408,396,396,189,315,402,360,393,393,306,198,366,375,369,384,357,357,321,381,372,117,321,285,351,435];
const volRed = new Set([1,2,6,7,9,11,12,14,15,17,19,20,21,24,27,28,31,33,34,35,37,38,40]);

const ma5 = [313,323,321,337,323,308,296,288,278,275,271,296,356,402,426,438,469,463,466,459,468,492,537,567,624,666,686,703,681,654,609,567,512,500,479,477,486,494,472,465,417,376,333];
const slowK = [636,669,675,689,720,727,706,694,718,741,748,753,804,872,920,934,963,972,967,952,956,969,969,970,976,997,994,993,956,937,902,862,819,771,754,737,721,691,655,640,618,582,544];
const slowD = [576,604,623,643,664,682,688,691,697,710,720,730,750,788,826,856,886,912,926,934,940,949,955,960,967,975,981,985,976,964,945,920,893,859,830,804,780,754,725,701,676,648,619];
const ma60 = [648,641,627,617,620,624,620,616,615,615,615,615,626,637,650,665,677,687,695,697,700,711,731,749,764,784,803,826,838,845,851,858,864,868,867,864,864,867,867,862,855,840,824];
const ma90 = [[0,720],[1,710],[2,699],[3,687],[4,683],[5,676],[6,671],[7,660],[8,652],[9,647],[10,641],[12,632],[14,622],[16,612],[18,604],[20,595],[22,591],[24,586],[26,584],[28,582],[30,578],[32,575],[34,571],[36,568],[38,563],[40,556],[42,548]];
const ma306 = [[0,929],[2,924],[6,918],[10,912],[16,901],[24,893],[33,889],[42,884]];
const week120 = [[9,708],[13,709],[15,716],[17,715],[18,714],[19,722],[20,723],[22,727],[23,733],[25,736],[27,737],[28,741],[32,743],[36,746],[37,749],[40,750],[42,753]];
const cloud = [[0,753],[1,741],[2,732],[3,724],[4,721],[5,720],[6,710],[7,690],[8,668],[9,611],[10,565],[11,557],[12,554],[13,518],[14,497],[15,493],[17,485],[18,455],[19,402],[20,364],[21,362],[22,360],[24,330],[25,340],[26,325],[28,325],[29,342],[30,320],[31,314],[32,311],[33,307],[34,290],[35,282],[36,283],[37,299],[38,301],[39,305],[40,313],[41,318],[42,341],[43.8,356],[45,357],[46.1,453],[47.4,485],[48,484],[50,415],[51,410],[51.7,413],[60,413],
  [60,570],[59,562],[58,536],[57.3,536],[56.3,545],[55,548],[54,552],[53,535],[52,534],[51,517],[49.8,515],[49,505],[47.9,504],[47.4,487],[46.1,492],[45,509],[44,527],[43,534],[42,536],[40,546],[39,549],[37,549],[36,566],[35,582],[20,582],[19,612],[18,651],[17,665],[12,674],[11,678],[10,678],[9,722],[8,760],[7.2,773],[1.1,773],[0,785]];

const pts = (d, f) => d.map((p, i) => Array.isArray(p) ? `${cx(p[0])},${f(p[1])}` : `${cx(i)},${f(p)}`).join(' ');
const line = (d, f, color, w = 1) => `<polyline points="${pts(d, f)}" fill="none" stroke="${color}" stroke-width="${w}"/>`;
const area = (d, f, color) => `<polygon points="${pts(d, f)}" fill="${color}"/>`;
const rule = (y, color, x2 = '100%', x1 = 0, w = 1) => `<line x1="${x1}" x2="${x2}" y1="${y}" y2="${y}" stroke="${color}" stroke-width="${w}" shape-rendering="crispEdges"/>`;

let back = '<rect x="961" y="0" width="27" height="695" fill="#fcc8fc"/>';
for (const y of [22.5,61.5,101.5,141.5,180.5,220.5,259.5,299.5,339.5,384.5,430.5,475.5,521.5,563.5,608.5,654.5]) back += rule(y, '#d4d4d4');
for (const y of [364.5, 523.5, 695.5]) back += rule(y, '#808888');
for (const y of [553.5, 663.5]) back += rule(y, '#808080');
document.getElementById('back').innerHTML = back;

let s = area(cloud, upper, '#98ccff');
s += line(ma306, upper, '#20e020', 2);
s += line(ma90, upper, '#f4c818', 2);
s += line(ma60, upper, '#0000c0', 2);
s += line(week120, upper, '#303080', 2);
s += line([[0,369],[12.8,369],[14,393],[34,393],[35,456],[42,456]], upper, '#0000c8', 2);
s += line([[0,717],[13,717],[14,237],[42,237]], upper, '#700070', 2);
s += rule(61, '#e010e0', cx(42), cx(0), 2);
s += line(ma5, upper, '#c82020');
candles.forEach(([h, t, b, l, up], i) => {
  const c = up ? RED : BLUE, x = Math.round(cx(i));
  s += `<g fill="${c}" shape-rendering="crispEdges"><rect x="${x}" y="${upper(h)}" width="1" height="${(l - h) / 3}"/><rect x="${x - 12}" y="${upper(t)}" width="${BAR}" height="${(b - t) / 3}"/></g>`;
});
s += rule(219, '#e010e0', '100%', 0, 2);
volTop.forEach((v, i) => {
  s += `<rect x="${Math.round(cx(i)) - 12}" y="${lower(v)}" width="${BAR}" height="${522 - lower(v)}" fill="${volRed.has(i) ? RED : BLUE}" shape-rendering="crispEdges"/>`;
});
s += area([[13.9,916], ...slowK.slice(14, 30).map((v, k) => [k + 14, v]), [29.6,916]], lower, '#a0dcf4');
s += area([[40.9,586],[42,544],[42,586]], lower, '#f4c0a0');
s += rule(663.5, '#808080');
s += line(slowK, lower, '#d87828') + line(slowD, lower, '#702878');
document.getElementById('series').innerHTML = s;

const marks = [[4,6],[399,6],[556,6],[712,6],[879,6],[978,6],[1041,6],[1188,6],[1358,6],[134,21],[232,21],[291,21],[384,21],[477,21],[4,370],[4,529]];
document.getElementById('markers').innerHTML = marks.map(([x, y]) => `<rect x="${x}.5" y="${y}.5" width="4" height="8"/>`).join('');

let t = '';
const ticks = (from, to, step, major) => { for (let y = from, k = 0; y < to; y += step, k++) t += rule(Math.round(y) + .5, '#889098', k % 5 === major ? 5 : 2); };
ticks(29.5, 362, 7.93, 4);
ticks(366, 522, 9.1, 2);
ticks(527, 690, 9.1, 4);
for (const y of [364.5, 523.5, 695.5]) t += rule(y, '#808888');
document.getElementById('ticks').innerHTML = t;
```
